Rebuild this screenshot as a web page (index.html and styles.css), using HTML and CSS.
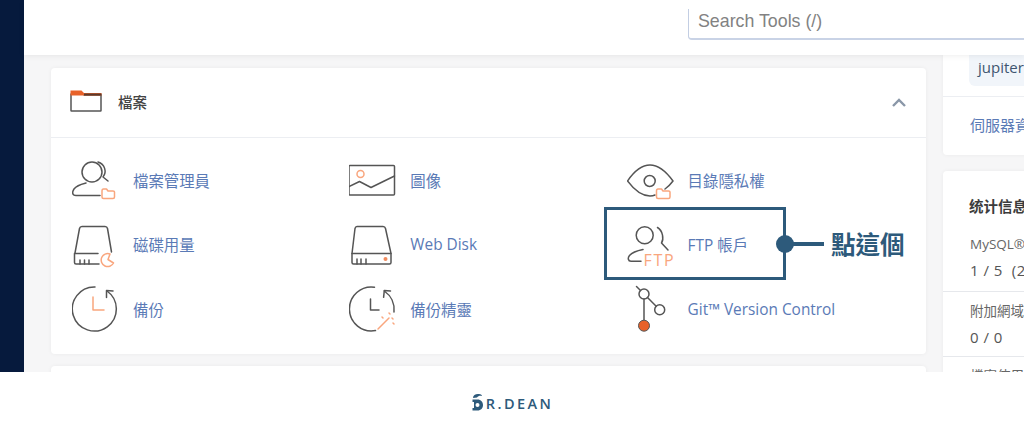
FILE: index.html
```html
<!DOCTYPE html>
<html lang="zh-Hant">
<head>
    <meta charset="UTF-8">
    <meta name="viewport" content="width=device-width, initial-scale=1.0">
    <title>cPanel 檔案</title>
    <link rel="stylesheet" href="styles.css">
</head>
<body>
    <div class="shot">
        <div class="sidebar"></div>
        <div class="content">
            <div class="topbar">
                <div class="search">Search Tools (/)</div>
            </div>
            <div class="main">
                <div class="left-col">
                    <section class="card">
                        <div class="card-head">
                            <svg class="head-icon" width="32" height="22" viewBox="0 0 32 22">
                                <path class="ln" d="M1 4V20.500Q1 21 1.500 21H30.500Q31 21 31 20.500V5H14"/>
                                <path d="M0.500 5.500V0.500H11.500L14 3H31.500V5.500Z" fill="#e8622a"/>
                                <path d="M14 4.500H31.500" stroke="#5a3a2c" stroke-width="2"/>
                            </svg>
                            <h2>檔案</h2>
                            <svg class="chevron" width="14" height="9" viewBox="0 0 14 9">
                                <path d="M1 8L7 2L13 8" fill="none" stroke="#8a97a8" stroke-width="2.400"/>
                            </svg>
                        </div>
                        <div class="tools">
                            <a class="tool">
                                <svg class="icon" viewBox="0 0 61 48">
                                    <circle class="ln" cx="20" cy="16" r="10"/>
                                    <path class="ln" d="M26 6C33 8 35 16 31 21L36 25"/>
                                    <path class="ln" d="M28 39.500H4C0 39.500 0 36 2 33C5 29 10 28 14 27"/>
                                    <path class="ac" d="M30 35V41Q30 42.500 31.500 42.500H41Q42.500 42.500 42.500 41V36Q42.500 35 41 35H36L34.500 33H31.500Q30 33 30 35Z"/>
                                </svg>
                                <span>檔案管理員</span>
                            </a>
                            <a class="tool">
                                <svg class="icon" viewBox="0 0 61 48">
                                    <rect class="ln" x="0" y="9.500" width="45.500" height="29.500" rx="1"/>
                                    <circle class="ac" cx="11.500" cy="18" r="3.500"/>
                                    <path class="ln" d="M0 30.500L10.500 25.500L22 31.500L45.500 20"/>
                                </svg>
                                <span>圖像</span>
                            </a>
                            <a class="tool">
                                <svg class="icon" viewBox="0 0 61 48">
                                    <path class="ln" d="M38 33C41 31 43 29 46 25C38 14 31 9 23 9C15 9 8 14 0.500 25C8 35 15 40 23 40C24 40 26 40 28 39"/>
                                    <circle class="ln" cx="22.700" cy="25" r="5.500"/>
                                    <path class="ac" d="M29.500 35V41Q29.500 42.500 31 42.500H41.500Q43 42.500 43 41V36Q43 35 41.500 35H36L34.500 33H31Q29.500 33 29.500 35Z"/>
                                </svg>
                                <span>目錄隱私權</span>
                            </a>

                            <a class="tool">
                                <svg class="icon" viewBox="0 0 61 48">
                                    <path class="ln" d="M3 32L7.500 7.500Q8 5.500 10 5.500H33Q35 5.500 35.500 7.500L39.500 31"/>
                                    <path class="ln" d="M26 32.500H2.500V41.500Q2.500 43 4 43H27"/>
                                    <path class="ln" d="M8 39V43M12.500 39V43M17 39V43"/>
                                    <path class="ac" d="M38 33A6.500 6.500 0 1 0 41.500 42L36 38.500Z"/>
                                </svg>
                                <span>磁碟用量</span>
                            </a>
                            <a class="tool">
                                <svg class="icon" viewBox="0 0 61 48">
                                    <path class="ln" d="M8 5.500H34Q36 5.500 36.500 7.500L42 32.500V41.500Q42 43 40.500 43H4.500Q3 43 3 41.500V32.500L6 7.500Q6.500 5.500 8 5.500Z"/>
                                    <path class="ln" d="M3 32.500H42M8 38V43M12 38V43M17 38V43"/>
                                    <circle cx="36.500" cy="38" r="2" fill="#f08a5d"/>
                                </svg>
                                <span>Web Disk</span>
                            </a>
                            <a class="tool">
                                <svg class="icon" viewBox="0 0 61 48">
                                    <circle class="ln" cx="17.700" cy="14.200" r="8.500"/>
                                    <path class="ln" d="M30.500 6.500C36 10 37 18 34.500 22L41 29"/>
                                    <path class="ln" d="M14 40.200H4C1 40.200 0.500 37 2.500 34.500C5.500 31 11 29.500 16 28.500"/>
                                    <text class="ftp-mark" x="16.500" y="44.500">FTP</text>
                                </svg>
                                <span>FTP 帳戶</span>
                            </a>

                            <a class="tool">
                                <svg class="icon" viewBox="0 0 61 48">
                                    <path class="ln" d="M23 2A22 22 0 1 0 35 6"/>
                                    <path class="ln" d="M41 6L34.500 5.500L34.500 12.500"/>
                                    <path class="ac" d="M21 12V25H32" stroke-width="1.800"/>
                                </svg>
                                <span>備份</span>
                            </a>
                            <a class="tool">
                                <svg class="icon" viewBox="0 0 61 48">
                                    <path class="ln" d="M25.500 2.200A22 22 0 1 0 26.500 45.600"/>
                                    <path class="ln" d="M45 27A22.800 22.800 0 0 0 35.300 6"/>
                                    <path class="ln" d="M41.500 6L35.300 5.500L34.600 12.300"/>
                                    <path class="ln" d="M21.500 14V25H30"/>
                                    <path class="ac" d="M29 44L40 33M33 32L34 33M43 33L44 34M40 28L41 29M44 38L45 39"/>
                                </svg>
                                <span>備份精靈</span>
                            </a>
                            <a class="tool">
                                <svg class="icon" viewBox="0 0 61 48">
                                    <circle class="ln" cx="17" cy="9" r="5"/>
                                    <circle class="ln" cx="32.700" cy="24.700" r="5"/>
                                    <path class="ln" d="M9.500 1.500L13.500 5.500M20.500 12.500L29.200 21.200M17 14V35"/>
                                    <circle cx="17" cy="40.700" r="5.500" fill="#e8622a" stroke="#555" stroke-width="1"/>
                                </svg>
                                <span>Git™ Version Control</span>
                            </a>
                        </div>
                    </section>
                    <section class="card card-next"></section>
                </div>
                <div class="side-col">
                    <section class="side-card side-first">
                        <div class="theme-box">
                            <div class="chip">jupiter</div>
                        </div>
                        <a class="side-link">伺服器資訊</a>
                    </section>
                    <section class="side-card">
                        <h3>统计信息</h3>
                        <div class="stat stat-first">
                            <div class="stat-name">MySQL® 資料庫</div>
                            <div class="stat-val">1 / 5&nbsp;&nbsp;(20%)</div>
                        </div>
                        <div class="stat">
                            <div class="stat-name">附加網域</div>
                            <div class="stat-val">0 / 0</div>
                        </div>
                        <div class="stat">
                            <div class="stat-name">檔案使用量</div>
                        </div>
                    </section>
                </div>
            </div>
        </div>

        <!-- annotation drawn on top of the screenshot -->
        <div class="callout">
            <div class="callout-box"></div>
            <div class="callout-dot"></div>
            <div class="callout-line"></div>
            <div class="callout-text">點這個</div>
        </div>
    </div>

    <div class="footer">
        <div class="logo">
            <svg width="13" height="18" viewBox="0 0 13 18">
                <path d="M2 5C2 2 5 0.500 8 1C10 1 11 2 11 3C9 2.500 7 3 6 4.500Z" fill="#2d5a7b"/>
                <path d="M1.500 6.500H6.500C10 6.500 12 9 12 12C12 15 10 17.500 6.500 17.500H1.500V15H3V9H1.500Z" fill="#2d5a7b"/>
                <circle cx="6.500" cy="12" r="2" fill="#fff"/>
            </svg>
            <span>R.DEAN</span>
        </div>
    </div>
</body>
</html>
```

FILE: styles.css
```css
* {
    box-sizing: border-box;
}
body {
    margin: 0;
    width: 1024px;
    height: 427px;
    overflow: hidden;
    background-color: #fff;
    font-family: 'Open Sans', 'Noto Sans CJK TC', sans-serif;
}
.shot {
    position: relative;
    display: flex;
    height: 372px;
    overflow: hidden;
}
.sidebar {
    flex: 0 0 24px;
    background-color: #061a3d;
}
.content {
    flex: 1;
    min-width: 0;
    display: flex;
    flex-direction: column;
    background-color: #f6f6f7;
}

/* top bar */
.topbar {
    position: relative;
    z-index: 1;
    flex: 0 0 55px;
    padding-left: 664px;
    background-color: #fff;
    box-shadow: 0 1px 6px rgba(0, 0, 0, 0.07);
}
.search {
    width: 400px;
    height: 31px;
    margin-top: 9px;
    padding-left: 9px;
    border-left: 1px solid #c3cee3;
    border-bottom: 2px solid #c9d3e6;
    border-bottom-left-radius: 4px;
    font-family: 'Liberation Sans', sans-serif;
    font-size: 17.800px;
    line-height: 25px;
    color: #828282;
}

/* main columns */
.main {
    flex: 1;
    display: flex;
    gap: 17px;
    padding: 13px 0 0 27px;
    overflow: hidden;
}
.left-col {
    flex: 0 0 875px;
}
.side-col {
    flex: 0 0 200px;
    margin-top: -13px;
}
.card {
    background-color: #fff;
    border-radius: 4px;
    box-shadow: 0 0 4px rgba(0, 0, 0, 0.05);
}
.card-next {
    height: 40px;
    margin-top: 12px;
}
.card-head {
    display: flex;
    align-items: center;
    height: 70px;
    padding: 0 20px 0 19px;
    border-bottom: 1px solid #eceef2;
}
.card-head h2 {
    flex: 1;
    margin: -3px 0 0 16px;
    font-size: 14.500px;
    font-weight: 500;
    color: #444;
}
.head-icon {
    margin-top: -3px;
}
.ln, .ac {
    fill: none;
    stroke-width: 1.500;
    stroke-linecap: round;
    stroke-linejoin: round;
}
.ln {
    stroke: #555;
}
.ac {
    stroke: #f9a67e;
}
.ftp-mark {
    fill: #f9a67e;
    font-size: 16px;
    letter-spacing: 1.700px;
}

/* tool grid */
.tools {
    display: grid;
    grid-template-columns: repeat(3, 277.300px);
    grid-auto-rows: 64.500px;
    padding: 10px 21px 12px;
}
.tool {
    display: flex;
    align-items: center;
    font-size: 15.400px;
    color: #5a7ab6;
}
.icon {
    flex: 0 0 61px;
    width: 61px;
    height: 48px;
}

/* right column */
.side-card {
    margin-bottom: 16px;
    background-color: #fff;
    border-radius: 4px;
    box-shadow: 0 0 4px rgba(0, 0, 0, 0.05);
    white-space: nowrap;
}
.side-first {
    border-top-left-radius: 0;
}
.theme-box {
    height: 42px;
    padding-left: 26px;
    border-bottom: 1px solid #eceef2;
}
.chip {
    height: 31px;
    padding-left: 9px;
    border-bottom-left-radius: 6px;
    background-color: #f1f5fa;
    font-size: 15px;
    line-height: 25px;
    color: #3f5570;
}
.side-link {
    display: block;
    height: 58px;
    padding: 17px 0 0 27px;
    font-size: 15px;
    color: #5a7ab6;
}
.side-card h3 {
    margin: 0;
    padding: 24px 0 0 26px;
    font-size: 14.500px;
    font-weight: 700;
    color: #3c3c3c;
}
.stat {
    height: 65px;
    padding: 9px 0 0 27px;
    border-bottom: 1px solid #e6e8ec;
}
.stat-first {
    height: 67px;
    margin-top: 9px;
}
.stat-name {
    font-size: 13.500px;
    line-height: 20px;
    color: #666;
}
.stat-val {
    margin-top: 5px;
    font-size: 15px;
    letter-spacing: 0.5px;
    line-height: 22px;
    color: #555;
}

/* annotation */
.callout {
    position: absolute;
    left: 604px;
    top: 207px;
    display: flex;
    align-items: center;
    height: 73px;
}
.callout-box {
    width: 182px;
    height: 73px;
    border: 3px solid #2d5a7b;
}
.callout-dot {
    width: 18px;
    height: 18px;
    margin-left: -10px;
    border-radius: 50%;
    background-color: #2d5a7b;
}
.callout-line {
    width: 32px;
    height: 4px;
    margin-left: -2px;
    background-color: #2d5a7b;
}
.callout-text {
    margin-left: 7px;
    font-family: 'Noto Sans CJK TC', sans-serif;
    font-size: 24.500px;
    font-weight: 700;
    color: #2d5a7b;
}

/* footer logo */
.footer {
    display: flex;
    justify-content: center;
    height: 55px;
    padding-top: 20px;
}
.logo {
    display: flex;
    align-items: flex-end;
    height: 19px;
    font-size: 14.500px;
    font-weight: 600;
    letter-spacing: 2.400px;
    line-height: 14px;
    color: #2d5a7b;
}
.logo span {
    margin-left: 2px;
}
```
